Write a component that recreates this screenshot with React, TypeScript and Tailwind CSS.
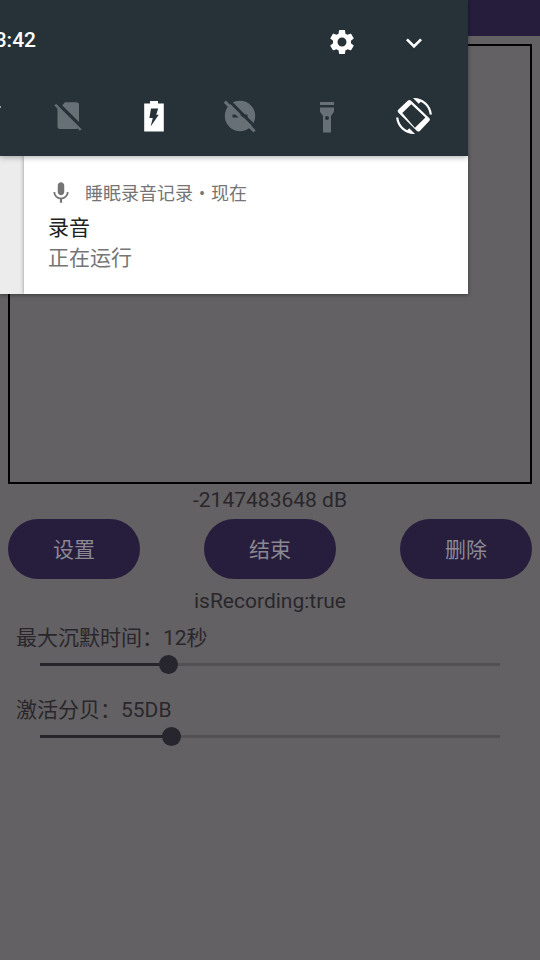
import { useState } from "react";
import type { ReactNode } from "react";
import { MdExpandMore, MdMic, MdSettings } from "react-icons/md";

function NoSimIcon() {
  return (
    <svg viewBox="0 0 36 36" className="size-9" fill="currentColor" aria-hidden="true">
      <path d="M12.2 7.2 15 4.2H26.5a2.5 2.5 0 0 1 2.5 2.5V24z" />
      <path d="M7.5 10 28 30.3a2.5 2.5 0 0 1-1.5.7H10a2.5 2.5 0 0 1-2.5-2.5z" />
      <path d="M5.2 6.6 30.8 32" fill="none" stroke="currentColor" strokeWidth="2.4" />
    </svg>
  );
}

function BatteryIcon() {
  return (
    <svg viewBox="1 0 36 36" className="size-9" aria-hidden="true">
      <path fill="currentColor" d="M14 3h8v2.6h5.8v28H8.2v-28H14z" />
      <path fill="#263238" d="M15 10.5h7.2l-2 6.2h2.6L14.6 28.5l2.2-8.6h-3.4z" />
    </svg>
  );
}

function DoNotDisturbOffIcon() {
  return (
    <svg viewBox="1 0 36 36" className="size-9" aria-hidden="true">
      <circle cx="18" cy="18" r="15.2" fill="currentColor" />
      <path d="M10.5 18h15" stroke="#263238" strokeWidth="3" />
      <path d="M5.4 1 36 31.6" stroke="#263238" strokeWidth="3" />
      <path d="M2.8 3.6 32.6 33.4" stroke="currentColor" strokeWidth="3" />
    </svg>
  );
}

function FlashlightIcon() {
  return (
    <svg viewBox="1 0 36 36" className="size-9" fill="currentColor" aria-hidden="true">
      <path d="M11 4h14v3H11z" />
      <path
        fillRule="evenodd"
        d="M11 9.5h14v4.2l-3 4.3v16.4h-8V18l-3-4.3zM18 18a2 2 0 1 0 0 4 2 2 0 0 0 0-4z"
      />
    </svg>
  );
}

function RotationIcon() {
  return (
    <svg viewBox="0 0 36 36" className="size-9" fill="currentColor" aria-hidden="true">
      <path
        fillRule="evenodd"
        d="M2.2 11.8 12 2.6q1.4-1.2 2.8 0L33.4 20.2q1.2 1.3 0 2.6L23.8 33q-1.4 1.2-2.8 0L2.2 14.4q-1.2-1.3 0-2.6zM6.3 14.9 18.9 29.7 29.4 19.4 15.3 6.3z"
      />
      <g transform="scale(1.5)">
        <path d="M16.48 2.52c3.27 1.55 5.61 4.72 5.97 8.48h1.5C23.44 4.84 18.29 0 12 0l-.66.03 3.81 3.81 1.33-1.32z" />
        <path d="M7.52 21.48C4.25 19.94 1.91 16.76 1.55 13H.05C.56 19.16 5.71 24 12 24l.66-.03-3.81-3.81-1.33 1.32z" />
      </g>
    </svg>
  );
}

function Tile({ label, off, children }: { label: string; off?: boolean; children: ReactNode }) {
  return (
    <button aria-label={label} className={off ? "size-9 text-[#677074]" : "size-9 text-white"}>
      {children}
    </button>
  );
}

function NotificationShade() {
  return (
    <section className="absolute left-0 top-0 w-[calc(100%-72px)] overflow-hidden bg-white shadow-[0_1px_4px_rgba(0,0,0,0.4)]">
      <header className="relative h-39 bg-[#263238] text-white shadow-[0_1px_6px_rgba(0,0,0,0.35)]">
        <div className="flex h-20 items-center pt-1 pr-9">
          <time className="flex w-9 justify-end overflow-hidden pb-1 text-[21px] leading-8 font-medium">3:42</time>
          <div className="ml-auto flex gap-9">
            <button aria-label="设置面板" className="flex size-9 items-center justify-center">
              <MdSettings className="size-[30px]" />
            </button>
            <button aria-label="展开" className="flex size-9 items-center justify-center pt-0.5">
              <MdExpandMore className="size-8" />
            </button>
          </div>
        </div>
        <div className="flex pt-[18px] pr-9">
          <span className="mt-2 h-0.5 w-px bg-[#9aa1a4]" />
          <div className="ml-[49px] flex flex-1 justify-between">
            <Tile label="无 SIM 卡" off><NoSimIcon /></Tile>
            <Tile label="电池"><BatteryIcon /></Tile>
            <Tile label="勿扰" off><DoNotDisturbOffIcon /></Tile>
            <Tile label="手电筒" off><FlashlightIcon /></Tile>
            <Tile label="自动旋转"><RotationIcon /></Tile>
          </div>
        </div>
      </header>
      <div className="flex bg-[#ececec] pl-6">
        <article className="flex-1 bg-white px-6 pt-5 pb-[22px] shadow-[0_0_4px_rgba(0,0,0,0.4)]">
          <div className="flex items-center gap-[11px] text-lg leading-8 text-[#757575]">
            <MdMic className="size-[26px]" />
            <p className="flex pt-0.5">
              睡眠录音记录<span className="w-[18px] text-center">•</span>现在
            </p>
          </div>
          <h2 className="pt-0.5 text-[21px] leading-8 text-[#212121]">录音</h2>
          <p className="text-[21px] leading-7 text-[#757575]">正在运行</p>
        </article>
      </div>
    </section>
  );
}

interface SliderProps {
  id: string;
  label: string;
  unit: string;
  min: number;
  max: number;
  initial: number;
}

function SliderRow({ id, label, unit, min, max, initial }: SliderProps) {
  const [value, setValue] = useState(initial);
  const percent = ((value - min) / (max - min)) * 100;
  return (
    <div className="h-18">
      <label htmlFor={id} className="block px-4 pb-px text-[21px] leading-8">
        {label}：{value}
        {unit}
      </label>
      <div className="px-[30px]">
        <input
          id={id}
          type="range"
          min={min}
          max={max}
          value={value}
          onChange={(e) => setValue(Number(e.target.value))}
          className="block h-[19px] w-full appearance-none bg-size-[100%_3px] bg-center bg-no-repeat [&::-webkit-slider-thumb]:size-[19px] [&::-webkit-slider-thumb]:appearance-none [&::-webkit-slider-thumb]:rounded-full [&::-webkit-slider-thumb]:bg-[#27252d]"
          style={{
            backgroundImage: `linear-gradient(to right, transparent 10px, #27252b 10px, #27252b ${percent}%, #525053 ${percent}%, #525053 calc(100% - 10px), transparent calc(100% - 10px))`,
          }}
        />
      </div>
    </div>
  );
}

function PillButton({ children }: { children: ReactNode }) {
  return (
    <button className="h-15 w-33 rounded-full bg-[#271e3e] pt-1 text-[21px] text-[#8c8892]">{children}</button>
  );
}

export default function App() {
  return (
    <div className="relative min-h-screen bg-[#636163] font-[Roboto,'Noto_Sans_CJK_SC',sans-serif] text-[#29272b]">
      <div className="h-9 bg-[#261d3d]" />
      <main>
        <div className="px-2 pt-2">
          <div className="h-110 border-2 border-black" />
          <p className="pb-[3px] text-center text-[21px] leading-8">-2147483648 dB</p>
          <div className="flex justify-between">
            <PillButton>设置</PillButton>
            <PillButton>结束</PillButton>
            <PillButton>删除</PillButton>
          </div>
          <p className="pt-1.5 pb-[5px] text-center text-[21px] leading-8">isRecording:true</p>
        </div>
        <SliderRow id="silence" label="最大沉默时间" unit="秒" min={5} max={30} initial={12} />
        <SliderRow id="decibel" label="激活分贝" unit="DB" min={35} max={105} initial={55} />
      </main>
      <NotificationShade />
    </div>
  );
}
